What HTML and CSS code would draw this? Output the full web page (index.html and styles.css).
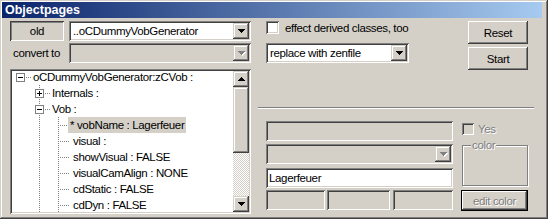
FILE: index.html
```html
<!DOCTYPE html>
<html lang="en">
<head>
    <meta charset="UTF-8">
    <title>Objectpages</title>
    <link rel="stylesheet" href="styles.css">
</head>
<body>

    <div class="window">
        <div class="titlebar">Objectpages</div>

        <div class="client">
            <div class="left">
                <div class="row">
                    <button class="btn pressed old_btn">old</button>
                    <div class="combo combo_wide">
                        <span class="combo_text">..oCDummyVobGenerator</span>
                        <span class="drop"><svg width="7" height="4" shape-rendering="crispEdges"><path d="M0 0h7v1H0zM1 1h5v1H1zM2 2h3v1H2zM3 3h1v1H3z"/></svg></span>
                    </div>
                </div>
                <div class="row row_2">
                    <span class="row_label">convert to</span>
                    <div class="combo combo_wide disabled">
                        <span class="combo_text"></span>
                        <span class="drop"><svg width="7" height="4" shape-rendering="crispEdges"><path d="M0 0h7v1H0zM1 1h5v1H1zM2 2h3v1H2zM3 3h1v1H3z"/></svg></span>
                    </div>
                </div>

                <div class="tree">
                    <div class="tree_items">
                        <div class="node">
                            <span class="cell toggle"><span class="box minus"></span></span>
                            <span class="text">oCDummyVobGenerator:zCVob :</span>
                        </div>
                        <div class="node">
                            <span class="cell"></span>
                            <span class="cell toggle pipe"><span class="box plus"></span></span>
                            <span class="text">Internals :</span>
                        </div>
                        <div class="node">
                            <span class="cell"></span>
                            <span class="cell toggle pipe"><span class="box minus"></span></span>
                            <span class="text">Vob :</span>
                        </div>
                        <div class="node">
                            <span class="cell"></span>
                            <span class="cell pipe"></span>
                            <span class="cell tee"></span>
                            <span class="text selected">* vobName : Lagerfeuer</span>
                        </div>
                        <div class="node">
                            <span class="cell"></span>
                            <span class="cell pipe"></span>
                            <span class="cell tee"></span>
                            <span class="text leaf">visual :</span>
                        </div>
                        <div class="node">
                            <span class="cell"></span>
                            <span class="cell pipe"></span>
                            <span class="cell tee"></span>
                            <span class="text leaf">showVisual : FALSE</span>
                        </div>
                        <div class="node">
                            <span class="cell"></span>
                            <span class="cell pipe"></span>
                            <span class="cell tee"></span>
                            <span class="text leaf">visualCamAlign : NONE</span>
                        </div>
                        <div class="node">
                            <span class="cell"></span>
                            <span class="cell pipe"></span>
                            <span class="cell tee"></span>
                            <span class="text leaf">cdStatic : FALSE</span>
                        </div>
                        <div class="node">
                            <span class="cell"></span>
                            <span class="cell pipe"></span>
                            <span class="cell tee"></span>
                            <span class="text leaf">cdDyn : FALSE</span>
                        </div>
                    </div>
                    <div class="vscroll">
                        <div class="sb_btn"><svg width="7" height="4" shape-rendering="crispEdges"><path d="M3 0h1v1H3zM2 1h3v1H2zM1 2h5v1H1zM0 3h7v1H0z"/></svg></div>
                        <div class="sb_thumb"></div>
                        <div class="sb_track"></div>
                        <div class="sb_btn"><svg width="7" height="4" shape-rendering="crispEdges"><path d="M0 0h7v1H0zM1 1h5v1H1zM2 2h3v1H2zM3 3h1v1H3z"/></svg></div>
                    </div>
                </div>
            </div>

            <div class="right">
                <div class="top">
                    <div class="options">
                        <label class="check"><span class="check_box"></span>effect derived classes, too</label>
                        <div class="combo combo_mid">
                            <span class="combo_text">replace with zenfile</span>
                            <span class="drop"><svg width="7" height="4" shape-rendering="crispEdges"><path d="M0 0h7v1H0zM1 1h5v1H1zM2 2h3v1H2zM3 3h1v1H3z"/></svg></span>
                        </div>
                    </div>
                    <div class="actions">
                        <button class="btn action_btn">Reset</button>
                        <button class="btn action_btn">Start</button>
                    </div>
                </div>

                <div class="separator"></div>

                <div class="bottom">
                    <div class="fields">
                        <div class="field"></div>
                        <div class="combo disabled field_combo">
                            <span class="combo_text"></span>
                            <span class="drop"><svg width="7" height="4" shape-rendering="crispEdges"><path d="M0 0h7v1H0zM1 1h5v1H1zM2 2h3v1H2zM3 3h1v1H3z"/></svg></span>
                        </div>
                        <div class="field edit">Lagerfeuer</div>
                        <div class="field_row">
                            <div class="field small_1"></div>
                            <div class="field small_2"></div>
                            <div class="field small_3"></div>
                        </div>
                    </div>
                    <div class="side">
                        <label class="check check_disabled"><span class="check_box"></span>Yes</label>
                        <fieldset class="group"><legend>color</legend></fieldset>
                        <button class="btn default_btn">edit color</button>
                    </div>
                </div>
            </div>
        </div>
    </div>

</body>
</html>
```

FILE: styles.css
```css
:root {
    --face: #d4d0c8;
    --shadow: #808080;
    --dark: #404040;
    --light: #ffffff;
}

body {
    margin: 0;
    background: var(--face);
    font-family: "Liberation Sans", Arial, sans-serif;
    font-size: 11.5px;
    letter-spacing: -0.35px;
    color: #000;
}

.window {
    width: 548px;
    height: 219px;
    box-sizing: border-box;
    padding: 2px;
    background: var(--face);
    box-shadow: inset -1px -1px var(--dark), inset 1px 1px var(--face),
                inset -2px -2px var(--shadow), inset 2px 2px var(--light);
    overflow: hidden;
}

.titlebar {
    height: 16px;
    margin-right: 4px;
    padding-left: 3px;
    background: linear-gradient(to right, #0a246a, #a6caf0);
    color: white;
    font-size: 12.5px;
    font-weight: bold;
    line-height: 16px;
    letter-spacing: 0;
}

.client {
    display: flex;
    gap: 7px;
    padding-left: 8px;
}

/* 3d borders */
.btn {
    font: inherit;
    letter-spacing: inherit;
    color: #000;
    border: none;
    padding: 0;
    background: var(--face);
    box-shadow: inset -1px -1px var(--dark), inset 1px 1px var(--light),
                inset -2px -2px var(--shadow), inset 2px 2px var(--face);
}

.btn.pressed {
    box-shadow: inset 1px 1px var(--dark), inset -1px -1px var(--light),
                inset 2px 2px var(--shadow), inset -2px -2px var(--face);
}

.combo, .field, .tree {
    box-sizing: border-box;
    box-shadow: inset 1px 1px var(--shadow), inset -1px -1px var(--light),
                inset 2px 2px var(--dark), inset -2px -2px var(--face);
}

/* left column */
.left {
    width: 241px;
}

.row {
    display: flex;
    align-items: center;
    gap: 5px;
    height: 20px;
    margin-top: 3px;
}

.row_2 {
    margin-top: 2px;
}

.old_btn {
    width: 54px;
    height: 20px;
}

.row_label {
    width: 51px;
    padding-left: 3px;
}

.combo {
    display: flex;
    align-items: center;
    height: 20px;
    padding: 2px;
    background: white;
}

.combo_wide {
    width: 182px;
}

.combo_text {
    flex: 1;
    padding-left: 2px;
    white-space: nowrap;
    overflow: hidden;
}

.drop {
    width: 16px;
    height: 16px;
    flex: none;
    display: flex;
    align-items: center;
    justify-content: center;
    background: var(--face);
    box-shadow: inset -1px -1px var(--dark), inset 1px 1px var(--face),
                inset -2px -2px var(--shadow), inset 2px 2px var(--light);
}

.combo.disabled {
    background: var(--face);
}

.combo.disabled .drop svg {
    fill: var(--shadow);
    filter: drop-shadow(1px 1px 0 var(--light));
}

/* tree */
.tree {
    display: flex;
    height: 145px;
    margin-top: 6px;
    padding: 2px;
    background: white;
}

.tree_items {
    flex: 1;
    overflow: hidden;
}

.tree_items .node:first-child {
    margin-top: -2px;
}

.node {
    display: flex;
    height: 16px;
    white-space: nowrap;
}

.cell {
    width: 19px;
    height: 16px;
    flex: none;
}

.pipe {
    background: repeating-linear-gradient(var(--shadow) 0 1px, transparent 1px 2px) 8px 0 / 1px 100% no-repeat;
}

.tee {
    background:
        repeating-linear-gradient(to right, var(--shadow) 0 1px, transparent 1px 2px) 10px 8px / 9px 1px no-repeat,
        repeating-linear-gradient(var(--shadow) 0 1px, transparent 1px 2px) 8px 0 / 1px 100% no-repeat;
}

.toggle {
    background: repeating-linear-gradient(to right, var(--shadow) 0 1px, transparent 1px 2px) 14px 8px / 5px 1px no-repeat;
}

.toggle.pipe {
    background:
        repeating-linear-gradient(to right, var(--shadow) 0 1px, transparent 1px 2px) 14px 8px / 5px 1px no-repeat,
        repeating-linear-gradient(var(--shadow) 0 1px, transparent 1px 2px) 8px 0 / 1px 100% no-repeat;
}

.box {
    display: block;
    box-sizing: border-box;
    width: 9px;
    height: 9px;
    margin: 4px 0 0 4px;
    border: 1px solid var(--shadow);
    background: white;
}

.box.minus {
    background: linear-gradient(#000, #000) 1px 3px / 5px 1px no-repeat, white;
}

.box.plus {
    background: linear-gradient(#000, #000) 1px 3px / 5px 1px no-repeat,
                linear-gradient(#000, #000) 3px 1px / 1px 5px no-repeat, white;
}

.text {
    line-height: 16px;
    padding: 0 2px;
}

.text.leaf {
    padding-left: 4px;
}

.text.selected {
    background: var(--face);
    margin-left: -1px;
}

.vscroll {
    width: 16px;
    display: flex;
    flex-direction: column;
}

.sb_btn, .sb_thumb {
    background: var(--face);
    box-shadow: inset -1px -1px var(--dark), inset 1px 1px var(--face),
                inset -2px -2px var(--shadow), inset 2px 2px var(--light);
}

.sb_btn {
    height: 16px;
    display: flex;
    align-items: center;
    justify-content: center;
}

.sb_thumb {
    height: 66px;
}

.sb_track {
    flex: 1;
    background: conic-gradient(var(--light) 25%, var(--face) 0 50%, var(--light) 0 75%, var(--face) 0) 0 0 / 2px 2px;
}

/* right column */
.right {
    width: 276px;
}

.top {
    display: flex;
    justify-content: space-between;
    padding: 3px 6px 0 8px;
}

.options {
    width: 143px;
}

.check {
    display: flex;
    align-items: center;
    gap: 6px;
    height: 13px;
    white-space: nowrap;
}

.check_box {
    width: 13px;
    height: 13px;
    flex: none;
    box-sizing: border-box;
    background: white;
    box-shadow: inset 1px 1px var(--shadow), inset -1px -1px var(--light),
                inset 2px 2px var(--dark), inset -2px -2px var(--face);
}

.combo_mid {
    width: 143px;
    margin-top: 9px;
}

.actions {
    display: flex;
    flex-direction: column;
    gap: 3px;
}

.action_btn {
    width: 60px;
    height: 23px;
}

.separator {
    margin-top: 37px;
    border-top: 1px solid var(--shadow);
    border-bottom: 1px solid var(--light);
}

.bottom {
    display: flex;
    gap: 8px;
    margin-top: 12px;
    padding-left: 8px;
}

.fields {
    width: 187px;
}

.field {
    height: 20px;
    background: var(--face);
}

.field_combo {
    margin-top: 3px;
}

.field.edit {
    margin-top: 4px;
    padding-left: 3px;
    background: white;
    line-height: 20px;
}

.field_row {
    display: flex;
    margin-top: 2px;
}

.small_1 {
    width: 59px;
}

.small_2 {
    width: 63px;
    margin-left: 2px;
}

.small_3 {
    width: 60px;
    margin-left: 3px;
}

.side {
    width: 67px;
    padding-top: 1px;
}

.check_disabled {
    gap: 4px;
    margin-left: 1px;
    color: var(--shadow);
    text-shadow: 1px 1px 0 var(--light);
}

.check_disabled .check_box {
    width: 12px;
    height: 12px;
    background: var(--face);
}

.group {
    box-sizing: border-box;
    width: 66px;
    height: 47px;
    margin: 4px 0 0 1px;
    padding: 0 0 0 8px;
    border: 1px solid var(--shadow);
    box-shadow: inset 1px 1px var(--light), 1px 1px 0 var(--light);
}

.group legend {
    padding: 0 1px;
    line-height: 12px;
    background: var(--face);
    color: var(--shadow);
    text-shadow: 1px 1px 0 var(--light);
}

.default_btn {
    width: 67px;
    height: 21px;
    margin-top: 4px;
    color: var(--shadow);
    text-shadow: 1px 1px 0 var(--light);
    box-shadow: inset 0 0 0 1px #000, inset -2px -2px var(--dark), inset 2px 2px var(--light),
                inset -3px -3px var(--shadow);
}
```
